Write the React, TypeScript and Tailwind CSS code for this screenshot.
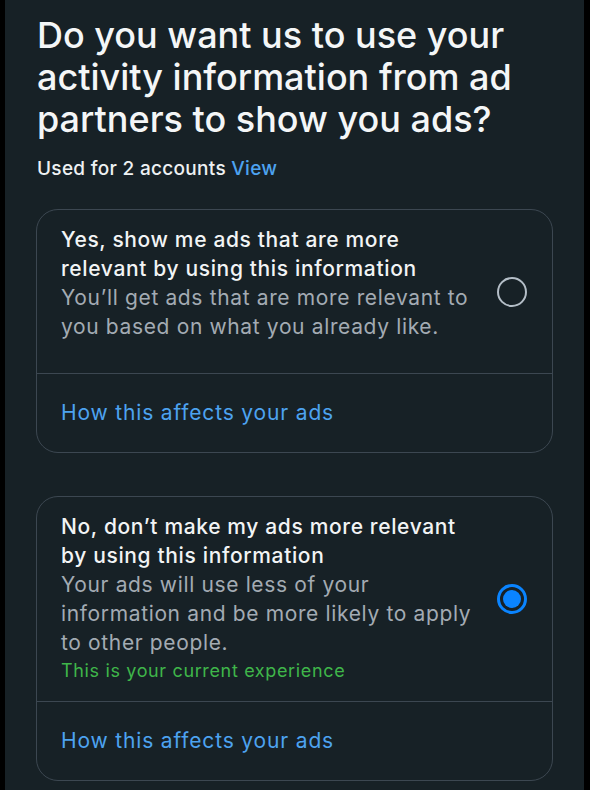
import React from 'react';

const font = { fontFamily: 'Inter, "Noto Sans", sans-serif' };

const Radio: React.FC<{ checked?: boolean }> = ({ checked }) =>
  checked ? (
    <div className="flex h-[30px] w-[30px] shrink-0 items-center justify-center rounded-full border-[3px] border-[#0a84ff]">
      <div className="h-[18px] w-[18px] rounded-full bg-[#0a84ff]" />
    </div>
  ) : (
    <div className="h-[30px] w-[30px] shrink-0 rounded-full border-[2.5px] border-[#b4bec7]" />
  );

const OptionCard: React.FC<{
  title: string;
  desc: string;
  note?: string;
  checked?: boolean;
}> = ({ title, desc, note, checked }) => (
  <div className="rounded-[22px] border border-[#3c4751]">
    <div className="flex items-center gap-[14px] pl-[24px] pr-[25px]">
      <div className={`flex-1 pt-[15px] tracking-[0.04em] ${note ? 'pb-[16px]' : 'pb-[32px]'}`}>
        <p className="text-[21px] font-medium leading-[29px] text-[#f2f4f5]">{title}</p>
        <p className="text-[21px] leading-[29px] text-[#a3abb3]">{desc}</p>
        {note && <p className="text-[18px] leading-[28px] text-[#3fb64a]">{note}</p>}
      </div>
      <Radio checked={checked} />
    </div>
    <div className="flex h-[79px] items-center border-t border-[#3c4751] px-[24px]">
      <span className="text-[21px] tracking-[0.04em] text-[#4da3f0]">How this affects your ads</span>
    </div>
  </div>
);

export default function App() {
  return (
    <div className="min-h-[790px] w-[590px] bg-black" style={font}>
      <div className="ml-[5px] min-h-[790px] w-[579px] bg-[#172126] pl-[31px] pr-[31px] pt-[14px]">
        <h1 className="pl-[1px] text-[36px] font-medium leading-[42px] text-[#f4f6f7]">
          Do you want us to use your activity information from ad partners to show you ads?
        </h1>
        <p className="mt-[16px] pl-[1px] text-[19px] font-medium leading-[26px] tracking-[0.3px] text-[#eef1f3]">
          Used for 2 accounts <span className="text-[#4da3f0]">View</span>
        </p>
        <div className="mt-[27px] flex flex-col gap-[43px]">
          <OptionCard
            title="Yes, show me ads that are more relevant by using this information"
            desc="You’ll get ads that are more relevant to you based on what you already like."
          />
          <OptionCard
            title="No, don’t make my ads more relevant by using this information"
            desc="Your ads will use less of your information and be more likely to apply to other people."
            note="This is your current experience"
            checked
          />
        </div>
      </div>
    </div>
  );
}
